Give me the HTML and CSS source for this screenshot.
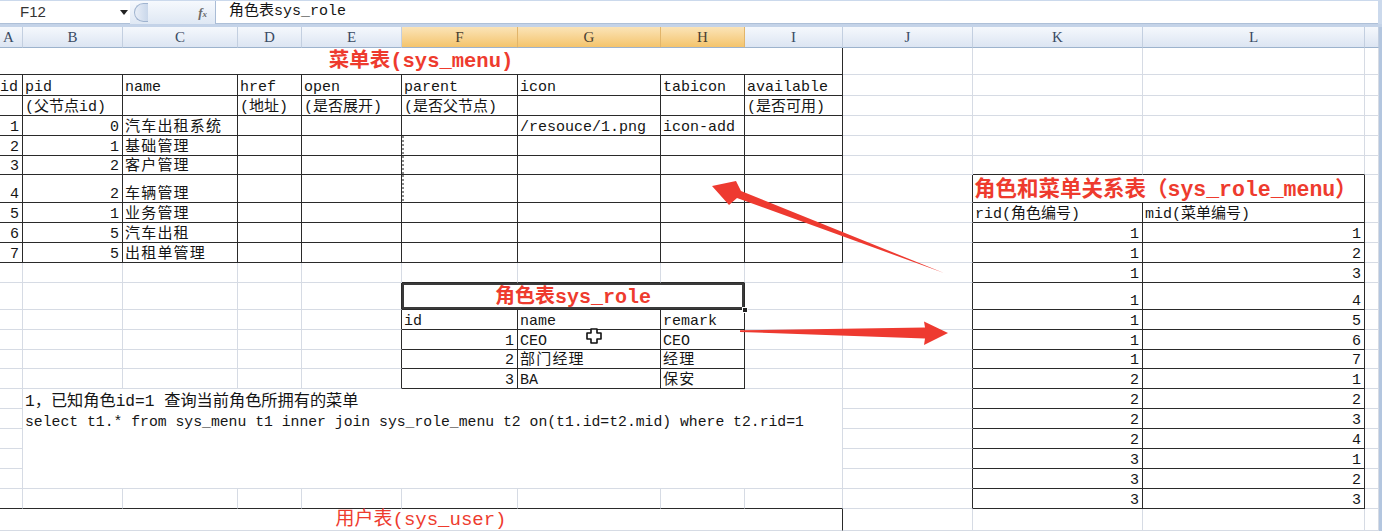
FILE: index.html
```html
<!DOCTYPE html>
<html lang="zh-CN">
<head>
<meta charset="utf-8">
<title>角色表sys_role</title>
<link rel="stylesheet" href="styles.css">
</head>
<body>
<div class="app">
  <div class="fbar">
    <div class="namebox">F12</div>
    <div class="nbdrop"><svg width="8" height="5" viewBox="0 0 8 5"><path d="M0 0h8L4 5z" fill="#222"/></svg></div>
    <div class="fxzone"><span class="knob"></span><span class="fx">f<span class="fxx">x</span></span></div>
    <div class="formula">角色表sys_role</div>
  </div>
  <div class="grid">
    <table class="sheet">
      <colgroup>
        <col class="wA"><col class="wB"><col class="wC"><col class="wD"><col class="wE"><col class="wF"><col class="wG"><col class="wH"><col class="wI"><col class="wJ"><col class="wK"><col class="wL"><col class="wM">
      </colgroup>
      <thead>
        <tr class="hdr"><th class="ca">A</th><th>B</th><th>C</th><th>D</th><th>E</th><th class="sel">F</th><th class="sel">G</th><th class="sel">H</th><th>I</th><th>J</th><th>K</th><th>L</th><th></th></tr>
      </thead>
      <tbody>
        <tr class="h27"><td colspan="9" class="k t">菜单表(sys_menu)</td><td></td><td></td><td></td><td></td></tr>
        <tr class="h21"><td class="k a0">id</td><td class="k">pid</td><td class="k">name</td><td class="k">href</td><td class="k">open</td><td class="k">parent</td><td class="k">icon</td><td class="k">tabicon</td><td class="k">available</td><td></td><td></td><td></td><td></td></tr>
        <tr><td class="k"></td><td class="k">(父节点id)</td><td class="k"></td><td class="k">(地址)</td><td class="k">(是否展开)</td><td class="k">(是否父节点)</td><td class="k"></td><td class="k"></td><td class="k">(是否可用)</td><td></td><td></td><td></td><td></td></tr>
        <tr><td class="k n">1</td><td class="k n">0</td><td class="k z">汽车出租系统</td><td class="k"></td><td class="k"></td><td class="k"></td><td class="k">/resouce/1.png</td><td class="k">icon-add</td><td class="k"></td><td></td><td></td><td></td><td></td></tr>
        <tr><td class="k n">2</td><td class="k n">1</td><td class="k z">基础管理</td><td class="k"></td><td class="k"></td><td class="k mark"></td><td class="k"></td><td class="k"></td><td class="k"></td><td></td><td></td><td></td><td></td></tr>
        <tr class="h19"><td class="k n">3</td><td class="k n">2</td><td class="k z">客户管理</td><td class="k"></td><td class="k"></td><td class="k mark"></td><td class="k"></td><td class="k"></td><td class="k"></td><td></td><td class="kb"></td><td class="kb"></td><td></td></tr>
        <tr class="h28"><td class="k n">4</td><td class="k n">2</td><td class="k z">车辆管理</td><td class="k"></td><td class="k"></td><td class="k mark"></td><td class="k"></td><td class="k"></td><td class="k"></td><td class="kr"></td><td colspan="2" class="k t t2">角色和菜单关系表（sys_role_menu）</td><td></td></tr>
        <tr><td class="k n">5</td><td class="k n">1</td><td class="k z">业务管理</td><td class="k"></td><td class="k"></td><td class="k"></td><td class="k"></td><td class="k"></td><td class="k"></td><td class="kr"></td><td class="k">rid(角色编号)</td><td class="k">mid(菜单编号)</td><td></td></tr>
        <tr><td class="k n">6</td><td class="k n">5</td><td class="k z">汽车出租</td><td class="k"></td><td class="k"></td><td class="k"></td><td class="k"></td><td class="k"></td><td class="k"></td><td class="kr"></td><td class="k n">1</td><td class="k n">1</td><td></td></tr>
        <tr><td class="k n">7</td><td class="k n">5</td><td class="k z">出租单管理</td><td class="k"></td><td class="k"></td><td class="k"></td><td class="k"></td><td class="k"></td><td class="k"></td><td class="kr"></td><td class="k n">1</td><td class="k n">2</td><td></td></tr>
        <tr><td></td><td></td><td></td><td></td><td></td><td class="kb"></td><td class="kb"></td><td class="kb"></td><td></td><td class="kr"></td><td class="k n">1</td><td class="k n">3</td><td></td></tr>
        <tr class="h27"><td></td><td></td><td></td><td></td><td class="kr"></td><td colspan="3" class="k t selc">角色表sys_role</td><td></td><td class="kr"></td><td class="k n">1</td><td class="k n">4</td><td></td></tr>
        <tr><td></td><td></td><td></td><td></td><td class="kr"></td><td class="k">id</td><td class="k">name</td><td class="k">remark</td><td></td><td class="kr"></td><td class="k n">1</td><td class="k n">5</td><td></td></tr>
        <tr><td></td><td></td><td></td><td></td><td class="kr"></td><td class="k n">1</td><td class="k">CEO</td><td class="k">CEO</td><td></td><td class="kr"></td><td class="k n">1</td><td class="k n">6</td><td></td></tr>
        <tr class="h19"><td></td><td></td><td></td><td></td><td class="kr"></td><td class="k n">2</td><td class="k z">部门经理</td><td class="k z">经理</td><td></td><td class="kr"></td><td class="k n">1</td><td class="k n">7</td><td></td></tr>
        <tr><td></td><td></td><td></td><td></td><td class="kr"></td><td class="k n">3</td><td class="k">BA</td><td class="k z">保安</td><td></td><td class="kr"></td><td class="k n">2</td><td class="k n">1</td><td></td></tr>
        <tr><td></td><td colspan="8" rowspan="5" class="note"><div class="l1">1，已知角色id=1 查询当前角色所拥有的菜单</div><div class="l2">select t1.* from sys_menu t1 inner join sys_role_menu t2 on(t1.id=t2.mid) where t2.rid=1</div></td><td class="kr"></td><td class="k n">2</td><td class="k n">2</td><td></td></tr>
        <tr><td></td><td class="kr"></td><td class="k n">2</td><td class="k n">3</td><td></td></tr>
        <tr><td></td><td class="kr"></td><td class="k n">2</td><td class="k n">4</td><td></td></tr>
        <tr><td></td><td class="kr"></td><td class="k n">3</td><td class="k n">1</td><td></td></tr>
        <tr><td></td><td class="kr"></td><td class="k n">3</td><td class="k n">2</td><td></td></tr>
        <tr><td class="kb"></td><td class="kb"></td><td class="kb"></td><td class="kb"></td><td class="kb"></td><td class="kb"></td><td class="kb"></td><td class="kb"></td><td class="kb"></td><td class="kr"></td><td class="k n">3</td><td class="k n">3</td><td></td></tr>
        <tr class="h22"><td colspan="9" class="kr t t3">用户表(sys_user)</td><td></td><td></td><td></td><td></td></tr>
      </tbody>
    </table>
    <div class="vedge"></div>
  </div>
  <svg class="overlay" width="1382" height="531" viewBox="0 0 1382 531">
    <polygon points="712,186 736,181 741,191 944,273 737,198 729,205" fill="#ee3a30"/>
    <polygon points="740,330.3 925,327.5 924,321.5 948,333 924,345 925,338.5 740,332" fill="#ee3a30"/>
    <rect x="742.5" y="307.5" width="5" height="5" fill="#222" stroke="#fff" stroke-width="1"/>
    <path d="M591 329h6v4h4v6h-4v4h-6v-4h-4v-6h4z" fill="#fff" stroke="#111" stroke-width="1.6" stroke-linejoin="round"/>
  </svg>
</div>
</body>
</html>
```

FILE: styles.css
```css
* { box-sizing: border-box; }
html, body { margin: 0; padding: 0; }
body {
  width: 1382px;
  height: 531px;
  overflow: hidden;
  background: #fff;
  font-family: "Liberation Mono", "Noto Sans CJK SC", monospace;
  font-size: 15px;
  color: #151515;
}
.app {
  position: relative;
  width: 1382px;
  height: 531px;
  display: flex;
  flex-direction: column;
  overflow: hidden;
}

/* formula bar */
.fbar {
  height: 27px;
  flex: none;
  display: flex;
  padding-top: 1px;
  background: #cbd9ec;
  border-bottom: 3px solid #c4d3e8;
}
.namebox {
  width: 118px;
  background: #fff;
  font-family: "Liberation Sans", sans-serif;
  font-size: 15px;
  color: #333;
  line-height: 22px;
  padding-left: 20px;
  border-bottom: 1px solid #aec0d8;
}
.nbdrop {
  width: 12px;
  background: #fff;
  display: flex;
  align-items: center;
  justify-content: center;
  border-bottom: 1px solid #aec0d8;
}
.fxzone {
  width: 86px;
  display: flex;
  align-items: center;
  justify-content: space-between;
  padding: 0 8px 0 4px;
  background: linear-gradient(#f6f9fd, #dfe8f4);
  border-right: 1px solid #a9bcd6;
}
.knob {
  width: 14px;
  height: 19px;
  border: 1px solid #9fb3cf;
  border-right: none;
  border-radius: 10px 0 0 10px;
  background: linear-gradient(90deg, #e8eef7, #c9d7ea);
}
.fx {
  font-family: "Liberation Serif", serif;
  font-style: italic;
  font-weight: bold;
  font-size: 13px;
  color: #6a6a6a;
}
.fxx { font-size: 9px; }
.formula {
  flex: 1;
  background: #fff;
  line-height: 22px;
  padding-left: 13px;
  margin-right: 4px;
  border-bottom: 1px solid #aec0d8;
}

/* grid */
.grid {
  flex: 1;
  display: flex;
  min-height: 0;
}
.vedge {
  width: 3px;
  background: #b3c6df;
}
.sheet {
  border-collapse: separate;
  border-spacing: 0;
  table-layout: fixed;
  width: 1379px;
}
.wA { width: 23px; }
.wB { width: 100px; }
.wC { width: 115px; }
.wD { width: 64px; }
.wE { width: 100px; }
.wF { width: 116px; }
.wG { width: 143px; }
.wH { width: 84px; }
.wI { width: 98px; }
.wJ { width: 130px; }
.wK { width: 170px; }
.wL { width: 222px; }
.wM { width: 14px; }

.sheet tr { height: 20px; }
.sheet tr.hdr { height: 21px; }
.sheet tr.h19 { height: 19px; }
.sheet tr.h21 { height: 21px; }
.sheet tr.h22 { height: 22px; }
.sheet tr.h27 { height: 27px; }
.sheet tr.h28 { height: 28px; }

.sheet td {
  padding: 0 2px;
  border-right: 1px solid #d6dbe4;
  border-bottom: 1px solid #d6dbe4;
  white-space: nowrap;
  vertical-align: bottom;
  line-height: 14px;
}
.sheet th {
  padding: 0;
  font-family: "Liberation Serif", serif;
  font-weight: normal;
  font-size: 15px;
  color: #3a4a63;
  line-height: 20px;
  text-align: center;
  vertical-align: middle;
  background: linear-gradient(#f5f8fc, #dce5f2);
  border-right: 1px solid #c3cfe0;
  border-bottom: 1px solid #9db3cd;
  overflow: hidden;
  white-space: nowrap;
}
.sheet th.ca { text-align: left; padding-left: 3px; }
.sheet th.sel {
  background: linear-gradient(#fbe4b8, #f4c46c);
  border-right-color: #e2b56a;
  color: #4a4030;
}

.k { border-right-color: #2a2a2a !important; border-bottom-color: #2a2a2a !important; }
.kr { border-right-color: #2a2a2a !important; }
.kb { border-bottom-color: #2a2a2a !important; }
.n { text-align: right; padding-right: 3px !important; }
.a0 { padding-left: 0 !important; }
.z { letter-spacing: 1.2px; }
.mark {
  background: repeating-linear-gradient(#8a8a8a 0 2px, transparent 2px 4px) left top / 2px 100% no-repeat;
}

.sheet td.t {
  color: #ee3b2e;
  font-weight: bold;
  font-size: 20.5px;
  line-height: 25px;
  text-align: center;
  vertical-align: middle;
}
.sheet td.t2 { text-align: left; font-size: 21.5px; padding-left: 1px; line-height: 24px; vertical-align: bottom; }
.sheet td.t3 { font-weight: normal; font-size: 19px; line-height: 20px; vertical-align: top; padding-top: 1px; }
.sheet td.selc { box-shadow: inset 0 0 0 2px #3a3a3a; font-size: 20px; line-height: 23px; vertical-align: bottom; }

.sheet td.note {
  vertical-align: top;
  line-height: 20px;
  padding: 3px 0 0 2px;
}
.note div { white-space: nowrap; }
.note .l1 { font-size: 16.2px; }
.note .l2 { font-size: 14.75px; }

.overlay {
  position: absolute;
  top: 0;
  left: 0;
  pointer-events: none;
}
```
